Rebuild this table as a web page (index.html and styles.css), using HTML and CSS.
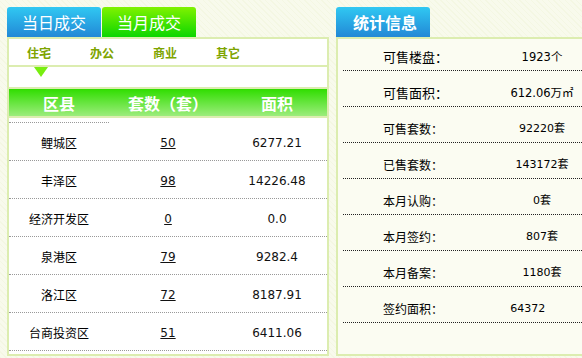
FILE: index.html
```html
<!DOCTYPE html>
<html lang="zh-CN">
<head>
<meta charset="utf-8">
<title>成交统计</title>
<link rel="stylesheet" href="styles.css">
</head>
<body>
<div class="page">
  <section class="left">
    <div class="tabs">
      <div class="tab tab-blue">当日成交</div>
      <div class="tab tab-green">当月成交</div>
    </div>
    <div class="lbox">
      <nav class="subnav">
        <span>住宅</span><span>办公</span><span>商业</span><span>其它</span>
      </nav>
      <div class="arrow-row"><i class="arrow"></i></div>
      <div class="thead">
        <span>区县</span><span>套数（套）</span><span>面积</span>
      </div>
      <div class="tbody">
        <div class="stub"></div>
        <div class="row"><span class="cn">鲤城区</span><a class="num">50</a><span class="area">6277.21</span></div>
        <div class="row"><span class="cn">丰泽区</span><a class="num">98</a><span class="area">14226.48</span></div>
        <div class="row"><span class="cn">经济开发区</span><a class="num">0</a><span class="area">0.0</span></div>
        <div class="row"><span class="cn">泉港区</span><a class="num">79</a><span class="area">9282.4</span></div>
        <div class="row"><span class="cn">洛江区</span><a class="num">72</a><span class="area">8187.91</span></div>
        <div class="row"><span class="cn">台商投资区</span><a class="num">51</a><span class="area">6411.06</span></div>
      </div>
    </div>
  </section>
  <section class="right">
    <div class="tabs">
      <div class="tab tab-blue tab-bold">统计信息</div>
    </div>
    <div class="rbox">
      <div class="srow first big"><span>可售楼盘：</span><span class="val">1923个</span></div>
      <div class="srow big"><span>可售面积：</span><span class="val">612.06万㎡</span></div>
      <div class="srow"><span>可售套数：</span><span class="val">92220套</span></div>
      <div class="srow"><span>已售套数：</span><span class="val">143172套</span></div>
      <div class="srow"><span>本月认购：</span><span class="val">0套</span></div>
      <div class="srow"><span>本月签约：</span><span class="val">807套</span></div>
      <div class="srow"><span>本月备案：</span><span class="val">1180套</span></div>
      <div class="srow"><span>签约面积：</span><span class="val">64372<span class="fade">1.5㎡</span></span></div>
    </div>
  </section>
</div>
</body>
</html>
```

FILE: styles.css
```css
* { box-sizing: border-box; }
html, body { margin: 0; padding: 0; }
body {
  width: 582px;
  height: 358px;
  overflow: hidden;
  font-family: "Noto Sans CJK SC", "DejaVu Sans", sans-serif;
  font-size: 12px;
  color: #000;
  background: repeating-linear-gradient(45deg, #f4f7e3 0 1px, #f8faec 1px 4px);
}
.page {
  display: flex;
  gap: 7px;
  padding: 7px 0 0 7px;
}
.left { width: 322px; flex: none; }
.right { width: 270px; flex: none; }

.tabs { display: flex; gap: 1px; height: 30px; }
.tab {
  width: 94px;
  height: 30px;
  color: #fff;
  font-size: 16px;
  line-height: 30px;
  text-align: center;
  border-radius: 3px 3px 0 0;
}
.tab-blue { background: linear-gradient(#30c8f2, #2288d6); }
.tab-green { background: linear-gradient(#80f200, #0cd600); }
.tab-bold { font-weight: 700; text-align: left; padding-left: 17px; }

.lbox {
  height: 319px;
  border: 2px solid #dcedb0;
  background: #fff;
}
.subnav {
  height: 28px;
  display: flex;
  gap: 39px;
  padding-left: 18px;
  align-items: center;
  border-bottom: 2px solid #dcedb0;
  color: #7ea400;
  font-weight: 700;
  font-size: 12px;
}
.arrow-row {
  height: 22px;
  border-bottom: 2px solid #dcedb0;
}
.arrow {
  display: block;
  width: 0;
  height: 0;
  margin-left: 25px;
  border-left: 7px solid transparent;
  border-right: 7px solid transparent;
  border-top: 10px solid #78ee10;
}
.thead {
  height: 29px;
  display: grid;
  grid-template-columns: 100px 118px 1fr;
  align-items: center;
  text-align: center;
  color: #fff;
  font-size: 16px;
  font-weight: 700;
  background: linear-gradient(#30de00, #9cec7c);
  border-bottom: 2px solid #dcedb0;
}
.tbody { padding-top: 4px; }
.stub {
  width: 100px;
  border-top: 1px dotted #999;
}
.row {
  height: 38px;
  display: grid;
  grid-template-columns: 100px 118px 1fr;
  align-items: center;
  text-align: center;
  border-bottom: 1px dotted #999;
  padding-top: 2px;
}
.num, .area {
  font-family: "DejaVu Sans", sans-serif;
  font-size: 12px;
  color: #111;
}
.num { text-decoration: underline; justify-self: center; }

.rbox {
  height: 319px;
  border-top: 2px solid #dcedb0;
  border-left: 2px solid #dcedb0;
  border-bottom: 2px solid #dcedb0;
  background: #fbfcf2;
}
.srow {
  height: 36px;
  margin-left: 5px;
  padding: 15px 0 0 40px;
  line-height: 14px;
  display: grid;
  grid-template-columns: 109px 100px;
  border-bottom: 1px dotted #222;
}
.srow.first { height: 32px; padding-top: 11px; }
.srow.big { font-size: 13px; }
.val {
  text-align: center;
  font-family: "DejaVu Sans", "Noto Sans CJK SC", sans-serif;
  font-size: 11px;
}
.big .val { font-size: 11.5px; }
.fade { color: #fbfcf2; }
```
